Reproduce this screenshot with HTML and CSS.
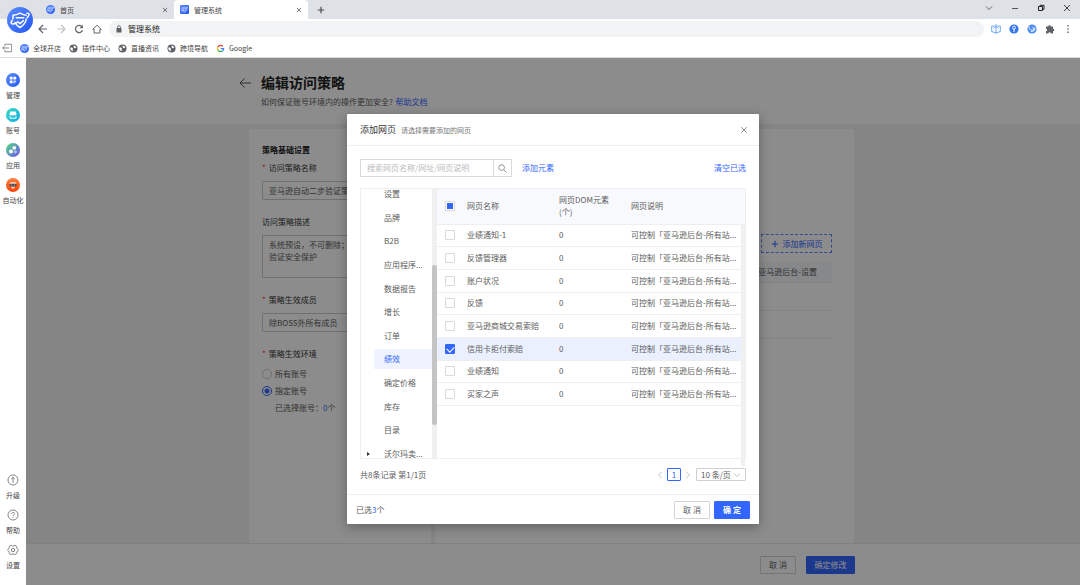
FILE: index.html
```html
<!DOCTYPE html>
<html lang="zh-CN">
<head>
    <meta charset="UTF-8">
    <meta name="viewport" content="width=device-width, initial-scale=1.0">
    <title>管理系统</title>
    <link rel="stylesheet" href="styles.css">
</head>
<body>
    <!-- shared icons -->
    <svg class="sprite" aria-hidden="true">
        <defs>
            <linearGradient id="blue" x1="0" y1="0" x2="1" y2="1"><stop offset="0" stop-color="#5b8cff"/><stop offset="1" stop-color="#2457f5"/></linearGradient>
            <linearGradient id="cyan" x1="0" y1="0" x2="1" y2="1"><stop offset="0" stop-color="#35dcc0"/><stop offset="1" stop-color="#12a8e8"/></linearGradient>
            <linearGradient id="mix" x1="0" y1="0" x2="1" y2="1"><stop offset="0" stop-color="#4fe07c"/><stop offset="1" stop-color="#6a4df5"/></linearGradient>
            <linearGradient id="orange" x1="0" y1="0" x2="0" y2="1"><stop offset="0" stop-color="#ff8038"/><stop offset="1" stop-color="#f9430c"/></linearGradient>
        </defs>
        <symbol id="mark" viewBox="0 0 26 26">
            <g fill="none" stroke="#fff" stroke-width="1.500" stroke-linecap="round" stroke-linejoin="round">
                <path d="M6 11.500V8.200c2.800 0 4.800-.8 7-2 2.200 1.200 4 2 6.200 2"/>
                <path d="M8 15.500c1 2 2.600 3.600 5 5 3.800-2.200 5.800-5.200 6.200-8.500"/>
                <path d="M9.300 10.800h7.400M10.500 14.600l2.500 2 3.400-3"/>
                <path d="M5.500 13c-3.200 3.800-.6 5 4.200 2.800M20 6.300c3-.6 2.600 1.900.2 4.300"/>
            </g>
        </symbol>
        <symbol id="globe" viewBox="0 0 10 10">
            <circle cx="5" cy="5" r="4.500" fill="#5f6368"/>
            <path d="M1.500 3.800l1.800.2 1.300 1.200-.6 1 .3 1.800C2.500 7.600 1.200 6.300 1.500 3.800zM5.200 1.600l2 .8.9 1.700-1.600.6-1.400-.9z" fill="#fff"/>
        </symbol>
        <symbol id="cross" viewBox="0 0 10 10"><path d="M1.500 1.500l7 7M8.500 1.500l-7 7" fill="none" stroke="currentColor" stroke-width="1.200"/></symbol>
        <symbol id="plus" viewBox="0 0 10 10"><path d="M5 1v8M1 5h8" fill="none" stroke="currentColor" stroke-width="1.400"/></symbol>
    </svg>

    <header class="browser">
        <svg class="browser-logo" viewBox="0 0 26 26"><circle cx="13" cy="13" r="13" fill="url(#blue)"/><use href="#mark"/></svg>

        <div class="tabs">
            <div class="tab">
                <svg class="icon-9" viewBox="0 0 26 26"><circle cx="13" cy="13" r="13" fill="url(#blue)"/><use href="#mark"/></svg>
                <span class="tab-title">首页</span>
                <button class="icon-btn" aria-label="关闭标签页"><svg class="icon-6"><use href="#cross"/></svg></button>
            </div>
            <div class="tab tab-active">
                <svg class="icon-9" viewBox="0 0 26 26"><rect width="26" height="26" rx="3" fill="url(#blue)"/><use href="#mark"/></svg>
                <span class="tab-title">管理系统</span>
                <button class="icon-btn" aria-label="关闭标签页"><svg class="icon-6"><use href="#cross"/></svg></button>
            </div>
            <button class="icon-btn tab-new" aria-label="新标签页"><svg class="icon-8"><use href="#plus"/></svg></button>
            <div class="window-controls">
                <button class="icon-btn" aria-label="展开"><svg class="icon-8" viewBox="0 0 8 8"><path d="M1 2.500l3 3 3-3" fill="none" stroke="#666"/></svg></button>
                <button class="icon-btn" aria-label="最小化"><svg class="icon-8" viewBox="0 0 8 8"><path d="M1 4.500h6" stroke="#555"/></svg></button>
                <button class="icon-btn" aria-label="还原"><svg class="icon-8" viewBox="0 0 8 8"><path d="M1.500 2.500h4v4h-4zM3 2.500v-1.200h4v4H5.800" fill="none" stroke="#222"/></svg></button>
                <button class="icon-btn" aria-label="关闭"><svg class="icon-8" viewBox="0 0 8 8"><path d="M1 1l6 6M7 1L1 7" stroke="#333" stroke-width=".9"/></svg></button>
            </div>
        </div>

        <div class="toolbar">
            <button class="icon-btn" aria-label="后退"><svg class="icon-12" viewBox="0 0 12 12"><path d="M10 6H2.500M6 2L2 6l4 4" fill="none" stroke="#5f6368" stroke-width="1.200"/></svg></button>
            <button class="icon-btn" aria-label="前进"><svg class="icon-12" viewBox="0 0 12 12"><path d="M2 6h7.500M6 2l4 4-4 4" fill="none" stroke="#bdc1c6" stroke-width="1.200"/></svg></button>
            <button class="icon-btn" aria-label="刷新"><svg class="icon-12" viewBox="0 0 12 12"><path d="M9.500 7.200A3.600 3.600 0 1 1 8.800 3.600" fill="none" stroke="#5f6368" stroke-width="1.200"/><path d="M9.900 1.800v3.400H6.500z" fill="#5f6368"/></svg></button>
            <button class="icon-btn" aria-label="主页"><svg class="icon-12" viewBox="0 0 12 12"><path d="M1.800 6.400L6 2.200l4.200 4.200H8.900V10H3.100V6.400z" fill="none" stroke="#5f6368"/></svg></button>
            <div class="address">
                <svg class="icon-8" viewBox="0 0 8 8"><rect x="1.500" y="3" width="5" height="4.500" rx=".5" fill="#5f6368"/><path d="M2.600 3V2a1.400 1.400 0 0 1 2.800 0v1" fill="none" stroke="#5f6368" stroke-width=".8"/></svg>
                <span>管理系统</span>
            </div>
            <button class="icon-btn" aria-label="立方体插件"><svg class="icon-12" viewBox="0 0 12 12"><path d="M4.500 3H1.700v5.500L6 10l4.300-1.500V3H7.500M6 1v9.500M3.500 5L6 3.500 8.500 5" fill="none" stroke="#5b9df8" stroke-width=".9"/></svg></button>
            <button class="icon-btn" aria-label="密钥插件"><svg class="icon-12" viewBox="0 0 12 12"><circle cx="6" cy="6" r="4.600" fill="#3574f2"/><circle cx="6" cy="4.600" r="1.500" fill="none" stroke="#fff" stroke-width=".9"/><path d="M6 6v3" stroke="#fff"/></svg></button>
            <button class="icon-btn" aria-label="漩涡插件"><svg class="icon-12" viewBox="0 0 12 12"><circle cx="6" cy="6" r="4.600" fill="#4b8ef5"/><path d="M3 3.200c0 3 2 4.800 4 3.800 1.300-.8 1-2.600-.5-2.700M8.800 4.500c.5 2.500-1.300 4.300-3.800 4" fill="none" stroke="#fff" stroke-width=".9"/></svg></button>
            <button class="icon-btn" aria-label="扩展程序"><svg class="icon-12" viewBox="0 0 12 12"><path d="M2 3.500h2.300a1.300 1.300 0 1 1 2.600 0H9v2.200a1.300 1.300 0 1 1 0 2.600v2.200H6.800a1.200 1.200 0 0 0-2.400 0H2V8.200a1.200 1.200 0 0 0 0-2.400z" fill="#5f6368"/></svg></button>
            <button class="icon-btn" aria-label="更多"><svg class="icon-12" viewBox="0 0 12 12"><path d="M6 2v1.500M6 5.200v1.500M6 8.500V10" stroke="#5f6368" stroke-width="1.400"/></svg></button>
        </div>

        <nav class="bookmarks">
            <a href="#" aria-label="收起"><svg class="icon-10" viewBox="0 0 12 12"><path d="M3.500 3.500v-2h8v9h-8v-2M8.500 6H.5M3 4L1 6l2 2" fill="none" stroke="#777"/></svg></a>
            <a href="#"><svg class="icon-9" viewBox="0 0 26 26"><circle cx="13" cy="13" r="13" fill="url(#blue)"/><use href="#mark"/></svg>全球开店</a>
            <a href="#"><svg class="icon-9"><use href="#globe"/></svg>插件中心</a>
            <a href="#"><svg class="icon-9"><use href="#globe"/></svg>直播资讯</a>
            <a href="#"><svg class="icon-9"><use href="#globe"/></svg>跨境导航</a>
            <a href="#"><svg class="icon-9" viewBox="0 0 10 10" fill="none" stroke-width="1.500"><path d="M7.600 2.600A3.400 3.400 0 0 0 2.100 3.300" stroke="#ea4335"/><path d="M2.100 3.300a3.400 3.400 0 0 0 0 3.400" stroke="#fbbc05"/><path d="M2.100 6.700a3.400 3.400 0 0 0 5.200.9" stroke="#34a853"/><path d="M7.300 7.600A3.400 3.400 0 0 0 8.400 5.200H5.200" stroke="#4285f4"/></svg>Google</a>
        </nav>
    </header>

    <div class="workspace">
        <aside class="sidebar">
            <nav class="side-group">
                <a href="#"><svg class="icon-14" viewBox="0 0 14 14"><circle cx="7" cy="7" r="7" fill="url(#blue)"/><path d="M3.800 3.800h2.800v2.800H3.800zM7.400 3.800h2.800v2.800H7.400zM3.800 7.400h2.800v2.800H3.800z" fill="#fff"/><path d="M7.400 7.400h2.800v1.200l-1.500 1.600H7.400z" fill="#fff" opacity=".7"/></svg>管理</a>
                <a href="#"><svg class="icon-14" viewBox="0 0 14 14"><circle cx="7" cy="7" r="7" fill="url(#cyan)"/><path d="M4.200 3.600h5.600l.8 3.200c-.4.9-1.500.9-1.900.2-.6.8-2.800.8-3.400 0-.4.700-1.500.7-1.900-.2z" fill="#fff"/><path d="M4 8.200v2h6v-2" fill="none" stroke="#fff"/></svg>账号</a>
                <a href="#"><svg class="icon-14" viewBox="0 0 14 14"><circle cx="7" cy="7" r="7" fill="url(#mix)"/><circle cx="8.200" cy="4.800" r="1.900" fill="#fff"/><circle cx="5" cy="8.600" r="2" fill="#fff"/><circle cx="9.400" cy="8.800" r="1.600" fill="#fff" opacity=".5"/></svg>应用</a>
                <a href="#"><svg class="icon-14" viewBox="0 0 14 14"><circle cx="7" cy="7" r="7" fill="url(#orange)"/><path d="M4.500 4.300h5L10.500 6H3.500zM4.500 8.500h5L7 11z" fill="#ffd9c9"/><rect x="3.500" y="5.800" width="7" height="2.600" rx=".8" fill="#444"/><path d="M4.800 7.100h1.400M7.800 7.100h1.400" stroke="#ddd" stroke-width=".8"/></svg>自动化</a>
            </nav>
            <nav class="side-group">
                <a href="#"><svg class="icon-14" viewBox="0 0 14 14" fill="none" stroke="#777" stroke-width=".9"><circle cx="7" cy="7" r="5"/><path d="M7 9.800V4.400M5.200 6L7 4.300 8.800 6"/></svg>升级</a>
                <a href="#"><svg class="icon-14" viewBox="0 0 14 14" fill="none" stroke="#777" stroke-width=".9"><circle cx="7" cy="7" r="5"/><path d="M5.600 5.800c0-2 2.900-1.900 2.900-.1C8.500 6.800 7 6.800 7 8M7 9v.9"/></svg>帮助</a>
                <a href="#"><svg class="icon-14" viewBox="0 0 14 14" fill="none" stroke="#777" stroke-width=".9"><path d="M5.200 2.300L6 3h2l.8-.7 2 1.200-.1 1.200.9 1.500.9.800-.9.800-.9 1.500.1 1.200-2 1.200L8 11H6l-.8.7-2-1.200.1-1.200-.9-1.500L1.500 7l.9-.8.9-1.500-.1-1.200z"/><circle cx="7" cy="7" r="1.700"/></svg>设置</a>
            </nav>
        </aside>

        <main class="page">
            <div class="page-header">
                <div class="page-inner title-row">
                    <button class="icon-btn back" aria-label="返回"><svg class="icon-12" viewBox="0 0 12 12"><path d="M12 6H1.200M5.500 1.500L1 6l4.500 4.500" fill="none" stroke="#555"/></svg></button>
                    <div>
                        <h1>编辑访问策略</h1>
                        <p>如何保证账号环境内的操作更加安全? <a href="#">帮助文档</a></p>
                    </div>
                </div>
            </div>

            <div class="page-inner cards">
                <form class="card card-form">
                    <h2>策略基础设置</h2>
                    <label class="required" for="name">访问策略名称</label>
                    <input class="field" id="name" type="text" value="亚马逊自动二步验证策略">
                    <label for="desc">访问策略描述</label>
                    <textarea class="field" id="desc">系统预设，不可删除；
验证安全保护</textarea>
                    <label class="required" for="member">策略生效成员</label>
                    <input class="field" id="member" type="text" value="除BOSS外所有成员">
                    <fieldset>
                        <legend class="required">策略生效环境</legend>
                        <label class="radio"><input type="radio" name="env">所有账号</label>
                        <label class="radio"><input type="radio" name="env" checked>指定账号</label>
                        <p>已选择账号：<em>0</em>个</p>
                    </fieldset>
                </form>
                <section class="card card-pages">
                    <button class="add-page"><svg class="icon-8"><use href="#plus"/></svg>添加新网页</button>
                    <ul>
                        <li class="current">亚马逊后台-设置</li>
                        <li></li>
                        <li></li>
                    </ul>
                </section>
            </div>

            <div class="page-footer">
                <div class="page-inner">
                    <button class="btn">取 消</button>
                    <button class="btn btn-primary btn-wide">确定修改</button>
                </div>
            </div>

            <div class="overlay">
                <div class="modal" role="dialog" aria-labelledby="modal-title">
                    <div class="modal-header">
                        <h3 id="modal-title">添加网页</h3>
                        <span>请选择需要添加的网页</span>
                        <button class="icon-btn" aria-label="关闭"><svg class="icon-8"><use href="#cross"/></svg></button>
                    </div>

                    <div class="modal-body">
                        <div class="search-row">
                            <div class="search">
                                <input type="text" aria-label="搜索网页" placeholder="搜索网页名称/网址/网页说明">
                                <button class="icon-btn" aria-label="搜索"><svg class="icon-9" viewBox="0 0 10 10"><path d="M6.600 6.600L9.500 9.500" stroke="#888"/><circle cx="4" cy="4" r="3.200" fill="none" stroke="#888"/></svg></button>
                            </div>
                            <a href="#">添加元素</a>
                            <a class="clear" href="#">清空已选</a>
                        </div>

                        <div class="picker">
                            <div class="tree">
                                <ul>
                                    <li>设置</li>
                                    <li>品牌</li>
                                    <li>B2B</li>
                                    <li>应用程序...</li>
                                    <li>数据报告</li>
                                    <li>增长</li>
                                    <li>订单</li>
                                    <li class="selected">绩效</li>
                                    <li>确定价格</li>
                                    <li>库存</li>
                                    <li>目录</li>
                                    <li class="parent">沃尔玛卖...</li>
                                </ul>
                            </div>
                            <div class="scrollbar"><div class="thumb"></div></div>
                            <div class="table-wrap">
                                <table>
                                    <thead>
                                        <tr>
                                            <th class="col-check"><input class="partial" type="checkbox" aria-label="全选"></th>
                                            <th class="col-name">网页名称</th>
                                            <th class="col-count">网页DOM元素<br>(个)</th>
                                            <th>网页说明</th>
                                        </tr>
                                    </thead>
                                    <tbody>
                                        <tr><td><input type="checkbox" aria-label="业绩通知-1"></td><td>业绩通知-1</td><td>0</td><td>可控制「亚马逊后台-所有站...</td></tr>
                                        <tr><td><input type="checkbox" aria-label="反馈管理器"></td><td>反馈管理器</td><td>0</td><td>可控制「亚马逊后台-所有站...</td></tr>
                                        <tr><td><input type="checkbox" aria-label="账户状况"></td><td>账户状况</td><td>0</td><td>可控制「亚马逊后台-所有站...</td></tr>
                                        <tr><td><input type="checkbox" aria-label="反馈"></td><td>反馈</td><td>0</td><td>可控制「亚马逊后台-所有站...</td></tr>
                                        <tr><td><input type="checkbox" aria-label="亚马逊商城交易索赔"></td><td>亚马逊商城交易索赔</td><td>0</td><td>可控制「亚马逊后台-所有站...</td></tr>
                                        <tr class="checked"><td><input type="checkbox" aria-label="信用卡拒付索赔" checked></td><td>信用卡拒付索赔</td><td>0</td><td>可控制「亚马逊后台-所有站...</td></tr>
                                        <tr><td><input type="checkbox" aria-label="业绩通知"></td><td>业绩通知</td><td>0</td><td>可控制「亚马逊后台-所有站...</td></tr>
                                        <tr><td><input type="checkbox" aria-label="买家之声"></td><td>买家之声</td><td>0</td><td>可控制「亚马逊后台-所有站...</td></tr>
                                    </tbody>
                                </table>
                            </div>
                            <div class="gutter"></div>
                        </div>

                        <div class="pager">
                            <span class="total">共8条记录 第1/1页</span>
                            <button class="icon-btn" aria-label="上一页"><svg class="icon-6" viewBox="0 0 6 6"><path d="M4.500 0l-3 3 3 3" fill="none" stroke="#bbb" stroke-width=".9"/></svg></button>
                            <button class="page-no">1</button>
                            <button class="icon-btn" aria-label="下一页"><svg class="icon-6" viewBox="0 0 6 6"><path d="M1.500 0l3 3-3 3" fill="none" stroke="#bbb" stroke-width=".9"/></svg></button>
                            <div class="page-size">
                                <select aria-label="每页条数"><option>10 条/页</option></select>
                                <svg class="icon-6" viewBox="0 0 6 6"><path d="M0 1.500l3 3 3-3" fill="none" stroke="#bbb" stroke-width=".9"/></svg>
                            </div>
                        </div>
                    </div>

                    <div class="modal-footer">
                        <span>已选<em>3</em>个</span>
                        <button class="btn">取 消</button>
                        <button class="btn btn-primary">确 定</button>
                    </div>
                </div>
            </div>
        </main>
    </div>
</body>
</html>
```

FILE: styles.css
```css
* {
    margin: 0;
    padding: 0;
    box-sizing: border-box;
}

body {
    display: flex;
    flex-direction: column;
    height: 100vh;
    overflow: hidden;
    font-family: "Noto Sans CJK SC", sans-serif;
    font-size: 8px;
    line-height: 12px;
    color: #5c5c5c;
    background: #fff;
}

input, textarea, select, button {
    font: inherit;
    color: inherit;
    outline: none;
}

button {
    cursor: pointer;
}

a {
    color: #3366ff;
    text-decoration: none;
}

em {
    font-style: normal;
    color: #3366ff;
}

ul {
    list-style: none;
}

svg {
    display: block;
    flex: none;
}

.sprite {
    position: absolute;
    width: 0;
    height: 0;
}

.icon-6 { width: 6px; height: 6px; }
.icon-8 { width: 8px; height: 8px; }
.icon-9 { width: 9px; height: 9px; }
.icon-10 { width: 10px; height: 10px; }
.icon-12 { width: 12px; height: 12px; }
.icon-14 { width: 14px; height: 14px; }

.icon-btn {
    display: flex;
    align-items: center;
    justify-content: center;
    flex: none;
    border: none;
    background: none;
}

/* browser frame */
.browser {
    position: relative;
    flex: none;
    border-bottom: 1px solid #ddd;
}

.browser-logo {
    position: absolute;
    left: 7px;
    top: 7px;
    width: 26px;
    height: 26px;
}

.tabs {
    display: flex;
    height: 19px;
    padding-left: 40px;
    background: #dee1e6;
    font-size: 7px;
}

.tab {
    display: flex;
    align-items: center;
    gap: 5px;
    width: 134px;
    padding: 0 6px;
    color: #444;
}

.tab-active {
    background: #fff;
    border-radius: 4px 4px 0 0;
}

.tab-title {
    flex: 1;
}

.tab-new {
    width: 26px;
    color: #444;
}

.window-controls {
    display: flex;
    margin-left: auto;
}

.window-controls button {
    width: 26px;
    height: 16px;
}

.toolbar {
    display: flex;
    align-items: center;
    gap: 6px;
    height: 20px;
    padding: 0 6px 0 37px;
}

.address {
    display: flex;
    flex: 1;
    align-items: center;
    gap: 5px;
    height: 16px;
    padding: 0 6px;
    border-radius: 8px;
    background: #f1f3f4;
    color: #222;
}

.bookmarks {
    display: flex;
    align-items: center;
    gap: 8px;
    height: 18px;
    padding-left: 2px;
    font-size: 7px;
}

.bookmarks a {
    display: flex;
    align-items: center;
    gap: 4px;
    color: #444;
}

/* left menu */
.workspace {
    display: flex;
    flex: 1;
    min-height: 0;
}

.sidebar {
    display: flex;
    flex-direction: column;
    justify-content: space-between;
    flex: none;
    width: 26px;
    padding: 15px 0 12px;
    font-size: 7px;
    line-height: 16px;
}

.side-group {
    display: flex;
    flex-direction: column;
    gap: 5px;
}

.side-group a {
    display: flex;
    flex-direction: column;
    align-items: center;
    color: #444;
    white-space: nowrap;
}

/* page under the dialog */
.page {
    position: relative;
    display: flex;
    flex: 1;
    flex-direction: column;
    background: #f3f3f3;
}

.page-header,
.page-footer {
    flex: none;
    background: #fff;
}

.page-header {
    padding: 15px 3px 16px 0;
}

.page-footer {
    padding: 12px 1px 11px 0;
    border-top: 1px solid #e6eaf2;
}

.page-inner {
    width: 605px;
    max-width: 100%;
    margin: 0 auto;
}

.page-footer .page-inner {
    display: flex;
    justify-content: flex-end;
    gap: 10px;
}

.title-row {
    display: flex;
    align-items: flex-start;
}

.back {
    width: 12px;
    height: 19px;
    margin: 0 10px 0 -10px;
}

h1 {
    font-size: 14px;
    line-height: 19px;
    color: #222;
}

.title-row p {
    margin-top: 4px;
}

.title-row p a {
    margin-left: 1px;
}

.cards {
    display: flex;
    flex: 1;
    gap: 4px;
    min-height: 0;
    padding: 5px 3px 0 0;
    box-sizing: content-box;
}

.card {
    background: #fff;
}

.card-form {
    display: flex;
    flex-direction: column;
    width: 182px;
    padding: 15px 13px;
}

h2 {
    margin-bottom: 6px;
    font-size: 8px;
    line-height: 12px;
    color: #222;
}

.card-form label,
.card-form legend {
    color: #333;
}

.required::before {
    content: "*";
    margin-right: 3px;
    color: #f5222d;
}

.field {
    flex: none;
    height: 19px;
    margin: 7px 0 16px;
    padding: 0 6px;
    border: 1px solid #ccc;
    border-radius: 1px;
    background: #fff;
}

textarea.field {
    height: 43px;
    padding: 3px 6px;
    resize: none;
}

fieldset {
    border: none;
}

legend {
    margin-bottom: 8px;
}

.card-form .radio {
    display: flex;
    align-items: center;
    gap: 3px;
    margin-bottom: 5px;
    color: #555;
}

.radio input {
    appearance: none;
    width: 10px;
    height: 10px;
    border: 1px solid #ccc;
    border-radius: 50%;
}

.radio input:checked {
    border-color: #3366ff;
    background: radial-gradient(#3366ff 0 2px, transparent 3px);
}

fieldset p {
    padding-left: 13px;
}

.card-pages {
    flex: 1;
    padding: 105px 22px 0;
}

.add-page {
    display: flex;
    align-items: center;
    justify-content: center;
    gap: 4px;
    width: 71px;
    height: 19px;
    margin: 0 0 9px auto;
    border: 1px dashed #6088ff;
    background: none;
    color: #3366ff;
}

.card-pages li {
    height: 28px;
    border-bottom: 1px solid #eee;
}

.card-pages .current {
    height: 21px;
    padding-right: 15px;
    background: #f5f7fb;
    line-height: 20px;
    text-align: right;
}

.btn {
    width: 36px;
    height: 18px;
    border: 1px solid #d4d4d4;
    border-radius: 1px;
    background: #fff;
}

.btn-primary {
    border-color: #3366ff;
    background: #3366ff;
    color: #fff;
    font-weight: bold;
}

.btn-wide {
    width: 49px;
    font-weight: normal;
}

/* dialog */
.overlay {
    position: absolute;
    inset: 0;
    display: flex;
    align-items: flex-start;
    justify-content: center;
    padding-top: 56px;
    background: rgba(0, 0, 0, 0.45);
}

.modal {
    width: 412px;
    border-radius: 1px;
    background: #fff;
    box-shadow: 0 3px 12px rgba(0, 0, 0, 0.3);
}

.modal-header {
    display: flex;
    align-items: center;
    gap: 5px;
    height: 32px;
    padding: 0 11px 0 13px;
    border-bottom: 1px solid #eee;
}

.modal-header span {
    flex: 1;
    font-size: 7px;
    color: #777;
}

h3 {
    font-size: 9px;
    font-weight: normal;
    color: #333;
}

.modal-header button {
    color: #888;
}

.modal-body {
    padding: 13px;
}

.search-row {
    display: flex;
    align-items: center;
    gap: 10px;
    margin-bottom: 11px;
}

.search {
    display: flex;
    width: 152px;
    height: 18px;
    border: 1px solid #d9d9d9;
}

.search input {
    flex: 1;
    min-width: 0;
    padding: 0 6px;
    border: none;
}

.search input::placeholder {
    color: #bbb;
}

.search button {
    width: 18px;
    border-left: 1px solid #d9d9d9;
}

.clear {
    margin-left: auto;
}

.picker {
    display: flex;
    height: 271px;
    border: 1px solid #eee;
}

.tree {
    width: 71px;
    overflow: hidden;
}

.tree ul {
    display: flex;
    flex-direction: column;
    justify-content: space-between;
    height: 280px;
    margin-top: -5px;
}

.tree li {
    flex: none;
    height: 20px;
    margin-left: 13px;
    padding-left: 10px;
    line-height: 20px;
    white-space: nowrap;
}

.tree .selected {
    background: #eef3ff;
    color: #3366ff;
}

.tree .parent {
    display: flex;
    align-items: center;
    gap: 14px;
    margin-left: 6px;
    padding: 0;
}

.parent::before {
    content: "";
    border: 2px solid transparent;
    border-left: 3px solid #333;
    border-right: none;
}

.scrollbar {
    width: 5px;
    padding-top: 76px;
    background: #f0f0f0;
}

.thumb {
    height: 160px;
    border-radius: 2px;
    background: #c4c4c4;
}

.table-wrap {
    flex: 1;
}

table {
    width: 100%;
    height: 217px;
    border-collapse: collapse;
    table-layout: fixed;
}

th, td {
    border-bottom: 1px solid #eee;
    font-weight: normal;
    text-align: left;
    white-space: nowrap;
}

th {
    height: 35px;
    background: #f7f9fd;
}

.col-check { width: 30px; }
.col-name { width: 92px; }
.col-count { width: 72px; }

.checked td {
    background: #ebf0ff;
}

table input {
    display: block;
    appearance: none;
    width: 10px;
    height: 10px;
    margin-left: 8px;
    border: 1px solid #d9d9d9;
    border-radius: 1px;
    background: #fff;
}

table input.partial {
    background: linear-gradient(#3366ff, #3366ff) center / 6px 6px no-repeat #fff;
}

table input:checked {
    border-color: #3366ff;
    background: #3366ff;
}

table input:checked::before {
    content: "";
    display: block;
    width: 6px;
    height: 4px;
    margin: 1px;
    border: solid #fff;
    border-width: 0 0 1px 1px;
    transform: rotate(-45deg);
}

.gutter {
    width: 4px;
    margin-bottom: -8px;
    border-top: 35px solid #f7f9fd;
    background: #f0f0f0;
}

.pager {
    display: flex;
    align-items: center;
    gap: 4px;
    margin-top: 9px;
}

.total {
    flex: 1;
}

.page-no {
    width: 14px;
    height: 13px;
    border: 1px solid #3366ff;
    border-radius: 1px;
    background: #fff;
    color: #3366ff;
    line-height: 11px;
}

.page-size {
    position: relative;
    margin-left: 1px;
}

.page-size select {
    display: block;
    appearance: none;
    width: 50px;
    height: 13px;
    padding-left: 4px;
    border: 1px solid #d0d0d0;
    border-radius: 1px;
    background: #fff;
    line-height: 11px;
}

.page-size svg {
    position: absolute;
    right: 6px;
    top: 4px;
    pointer-events: none;
}

.modal-footer {
    display: flex;
    align-items: center;
    gap: 4px;
    height: 30px;
    padding: 0 9px;
    border-top: 1px solid #eee;
}

.modal-footer span {
    flex: 1;
}
```
